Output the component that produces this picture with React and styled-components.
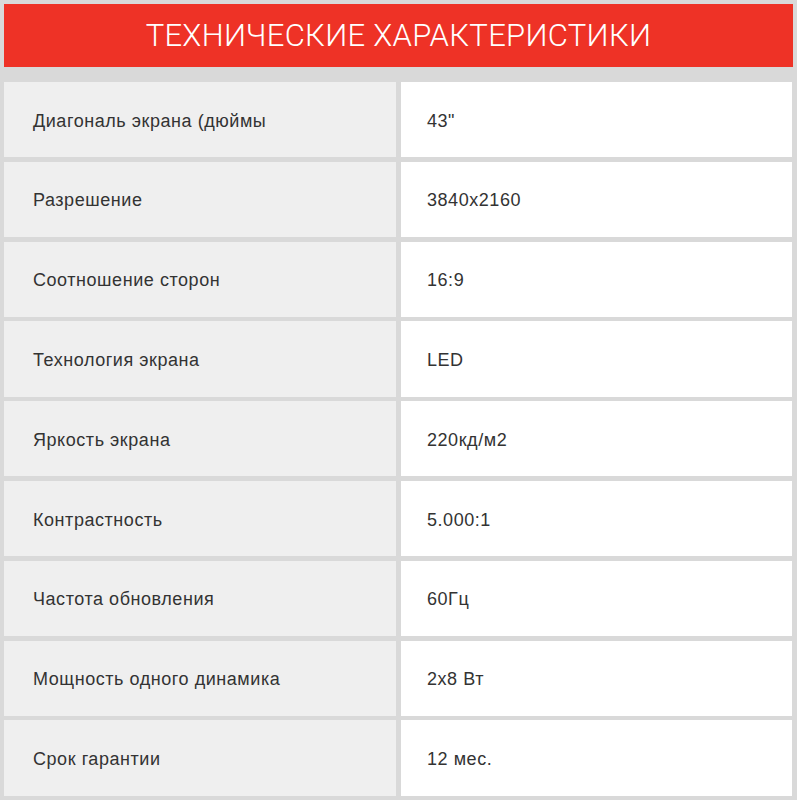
import React from "react";
import styled, { createGlobalStyle } from "styled-components";

const Global = createGlobalStyle`
  html, body { margin: 0; padding: 0; background: #d9d9d9; }
  body { font-family: "Liberation Sans", Arial, sans-serif; }
`;

const Page = styled.div`
  padding: 4px;
  display: flex;
  flex-direction: column;
  gap: 15px;
`;

const Header = styled.div`
  height: 63px;
  background: #ee3226;
  display: flex;
  align-items: center;
  justify-content: center;
  color: #fff;
  font-family: "Roboto", "Liberation Sans", sans-serif;
  font-weight: 300;
  font-size: 31px;
  letter-spacing: 0.3px;
`;

const Table = styled.div`
  display: grid;
  grid-template-columns: 392px 1fr;
  column-gap: 5px;
  row-gap: 4.5px;
  padding-right: 1px;
`;

const Cell = styled.div`
  height: 75.3px;
  box-sizing: border-box;
  padding-top: 3px;
  display: flex;
  align-items: center;
  padding-left: ${(p) => (p.$value ? "26px" : "29px")};
  background: ${(p) => (p.$value ? "#ffffff" : "#efefef")};
  color: #333;
  font-size: 18px;
  letter-spacing: 0.55px;
`;

const rows = [
  ["Диагональ экрана (дюймы", "43\""],
  ["Разрешение", "3840x2160"],
  ["Соотношение сторон", "16:9"],
  ["Технология экрана", "LED"],
  ["Яркость экрана", "220кд/м2"],
  ["Контрастность", "5.000:1"],
  ["Частота обновления", "60Гц"],
  ["Мощность одного динамика", "2x8 Вт"],
  ["Срок гарантии", "12 мес."],
];

export default function App() {
  return (
    <>
      <Global />
      <Page>
        <Header>ТЕХНИЧЕСКИЕ ХАРАКТЕРИСТИКИ</Header>
        <Table>
          {rows.map(([k, v]) => (
            <React.Fragment key={k}>
              <Cell>{k}</Cell>
              <Cell $value>{v}</Cell>
            </React.Fragment>
          ))}
        </Table>
      </Page>
    </>
  );
}
